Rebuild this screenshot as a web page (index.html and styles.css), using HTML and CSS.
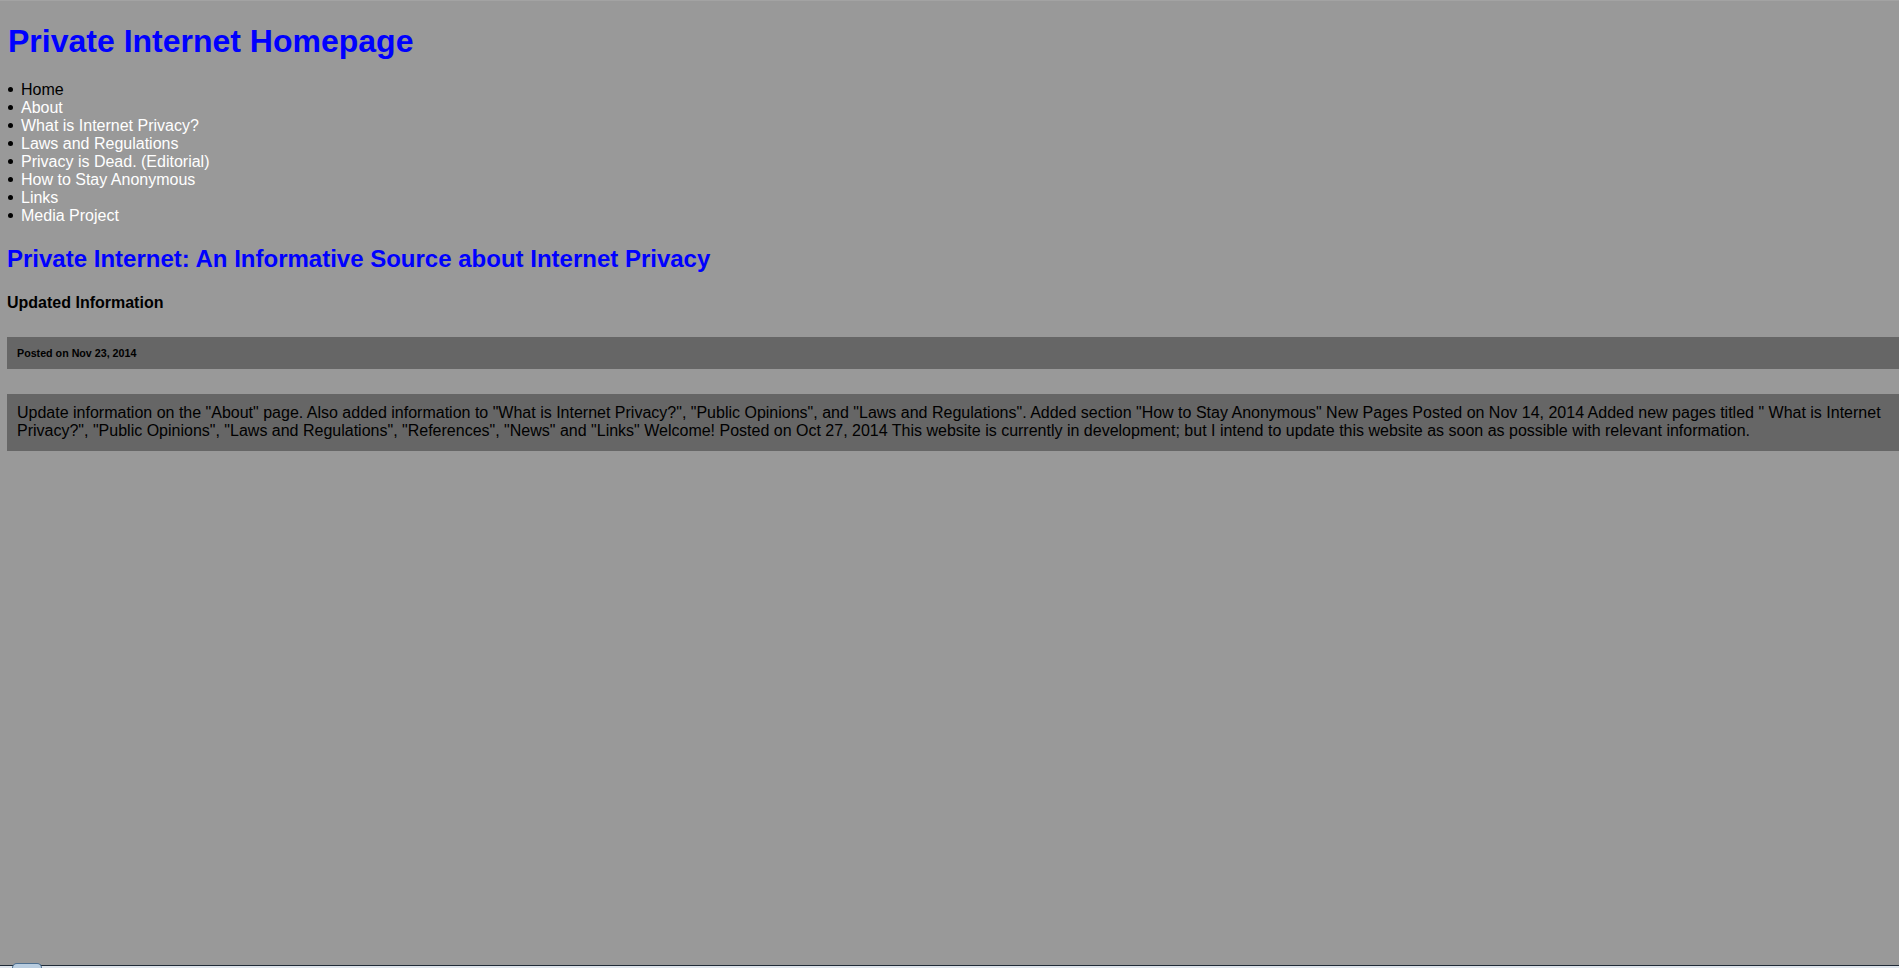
FILE: index.html
```html
<!DOCTYPE html>
<html lang="en">
<head>
<meta charset="utf-8">
<title>Private Internet Homepage</title>
<link rel="stylesheet" href="styles.css">
</head>
<body>
<h1 class="site-title">Private Internet Homepage</h1>
<ul class="nav">
  <li><a class="current" href="#">Home</a></li>
  <li><a href="#">About</a></li>
  <li><a href="#">What is Internet Privacy?</a></li>
  <li><a href="#">Laws and Regulations</a></li>
  <li><a href="#">Privacy is Dead. (Editorial)</a></li>
  <li><a href="#">How to Stay Anonymous</a></li>
  <li><a href="#">Links</a></li>
  <li><a href="#">Media Project</a></li>
</ul>
<h2 class="subtitle">Private Internet: An Informative Source about Internet Privacy</h2>
<h4 class="section-title">Updated Information</h4>
<h6 class="post-date">Posted on Nov 23, 2014</h6>
<div class="post-body">Update information on the "About" page. Also added information to "What is Internet Privacy?", "Public Opinions", and "Laws and Regulations". Added section "How to Stay Anonymous" New Pages Posted on Nov 14, 2014 Added new pages titled " What is Internet Privacy?", "Public Opinions", "Laws and Regulations", "References", "News" and "Links" Welcome! Posted on Oct 27, 2014 This website is currently in development; but I intend to update this website as soon as possible with relevant information.</div>
<div class="taskbar"><span class="orb"></span></div>
</body>
</html>
```
FILE: styles.css
```css
html {
  background: #999999;
}
body {
  margin: 8px 0 8px 7px;
  font-family: "Liberation Sans", Arial, sans-serif;
  color: #000;
}
html::before {
  content: "";
  display: block;
  position: fixed;
  top: 0;
  left: 0;
  right: 0;
  height: 1px;
  background: #a3a3a3;
}
.site-title {
  color: #0000ff;
  font-size: 32px;
  margin: 15px 0 21px 1px;
}
.nav {
  list-style: none;
  padding: 0;
  margin: 16px 0;
  font-size: 16px;
  line-height: 18px;
}
.nav li::before {
  content: "";
  display: inline-block;
  width: 5px;
  height: 5px;
  border-radius: 50%;
  background: #000;
  margin: 0 8px 0 1px;
  vertical-align: 3px;
}
.nav a {
  color: #ffffff;
  text-decoration: none;
}
.nav a.current {
  color: #000;
}
.subtitle {
  color: #0000ff;
  font-size: 24px;
  margin: 20px 0;
}
.section-title {
  font-size: 16px;
  margin: 21px 0;
}
.post-date {
  font-size: 10.7px;
  background: #666666;
  padding: 10px 10px;
  margin: 25px 0;
}
.post-body {
  background: #666666;
  padding: 10px 10px;
  font-size: 16px;
  line-height: 18.4px;
}
.taskbar {
  position: fixed;
  left: 0;
  right: 0;
  bottom: 0;
  height: 2px;
  border-top: 1px solid #1f2a36;
  background: #dfe5ec;
}
.orb {
  position: absolute;
  left: 12px;
  bottom: 0;
  width: 28px;
  height: 4px;
  border-radius: 14px 14px 0 0;
  background: #b9cde0;
  border: 1px solid #4c6e8f;
  border-bottom: 0;
}
```
